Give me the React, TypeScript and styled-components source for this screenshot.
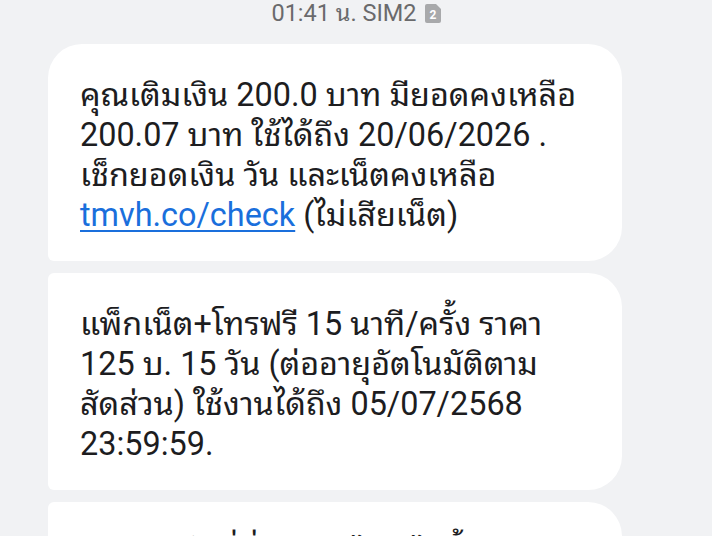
import styled, { createGlobalStyle } from 'styled-components';

const GlobalStyle = createGlobalStyle`
    html, body {
        margin: 0;
        padding: 0;
        background-color: #f1f2f4;
    }

    body {
        font-family: Roboto, "Noto Sans Thai Looped", "Noto Sans Thai", "Noto Sans", sans-serif;
    }
`;

const StyledThreadRoot = styled.main`
    width: 712px;
    height: 536px;
    overflow: hidden;

    display: flex;
    flex-direction: column;

    background-color: #f1f2f4;
`;

const StyledTimestamp = styled.div`
    height: 28px;

    display: flex;
    justify-content: center;
    align-items: center;
    gap: 8px;

    color: #6a6a6c;
    font-size: 23.5px;
    line-height: 26px;
    font-weight: 400;

    .simBadge {
        display: block;
    }
`;

const StyledMessageList = styled.section`
    padding: 18px 90px 0 48px;

    display: flex;
    flex-direction: column;
    gap: 12px;
`;

type BubbleProps = {
    $first?: boolean;
    $last?: boolean;
};

const StyledBubble = styled.article<BubbleProps>`
    padding: 31px 32px 26px;

    background-color: #ffffff;
    border-radius: ${({ $first, $last }) =>
        `${$first ? 34 : 6}px 34px 34px ${$last ? 34 : 6}px`};

    color: #1d1d1f;
    font-size: 32.4px;
    line-height: 40px;
    font-weight: 400;

    a {
        color: #1a6fdc;
        text-decoration: underline;
        text-decoration-thickness: 1.5px;
        text-underline-offset: 4px;
    }
`;

const StyledLine = styled.span`
    display: block;
    white-space: nowrap;
`;

function SimBadge() {
    return (
        <svg className="simBadge" width="16" height="19" viewBox="0 0 16 19">
            <path d="M2 0H11L16 5V17Q16 19 14 19H2Q0 19 0 17V2Q0 0 2 0Z" fill="#a8a9ab" />
            <text
                x="8"
                y="14.5"
                textAnchor="middle"
                fill="#ffffff"
                fontSize="12"
                fontWeight="700"
                fontFamily="Roboto, sans-serif">
                2
            </text>
        </svg>
    );
}

function App() {
    return (
        <>
            <GlobalStyle />
            <StyledThreadRoot>
                <StyledTimestamp>
                    <span>01:41 น. SIM2</span>
                    <SimBadge />
                </StyledTimestamp>

                <StyledMessageList>
                    <StyledBubble $first>
                        <StyledLine>คุณเติมเงิน 200.0 บาท มียอดคงเหลือ</StyledLine>
                        <StyledLine>200.07 บาท ใช้ได้ถึง 20/06/2026 .</StyledLine>
                        <StyledLine>เช็กยอดเงิน วัน และเน็ตคงเหลือ</StyledLine>
                        <StyledLine>
                            <a href="#">tmvh.co/check</a> (ไม่เสียเน็ต)
                        </StyledLine>
                    </StyledBubble>

                    <StyledBubble>
                        <StyledLine>แพ็กเน็ต+โทรฟรี 15 นาที/ครั้ง ราคา</StyledLine>
                        <StyledLine>125 บ. 15 วัน (ต่ออายุอัตโนมัติตาม</StyledLine>
                        <StyledLine>สัดส่วน) ใช้งานได้ถึง 05/07/2568</StyledLine>
                        <StyledLine>23:59:59.</StyledLine>
                    </StyledBubble>

                    <StyledBubble $last>
                        <StyledLine>สมัครแพ็กที่นี่ ดิจิทัล ไทย ไม่อั้น</StyledLine>
                    </StyledBubble>
                </StyledMessageList>
            </StyledThreadRoot>
        </>
    );
}

export default App;
